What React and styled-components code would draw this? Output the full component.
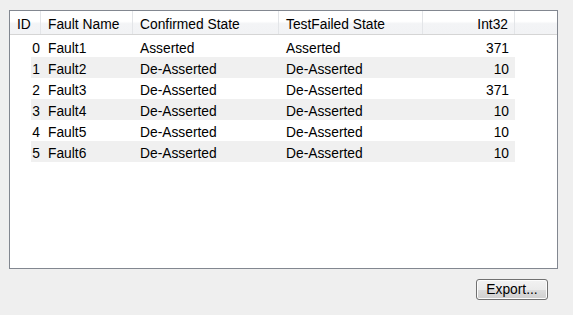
import React from 'react';
import styled, { createGlobalStyle } from 'styled-components';

const GlobalStyle = createGlobalStyle`
    html, body {
        margin: 0;
        padding: 0;
        background: #efefef;
    }
    body {
        font-family: "Liberation Sans", Arial, sans-serif;
        font-size: 13.8px;
        color: #000;
    }
`;

const COLS = '31px 92px 146px 144px 92px 1fr';

const Window = styled.div`
    width: 573px;
    height: 315px;
    box-sizing: border-box;
    padding: 10px 0 0 9px;
    display: flex;
    flex-direction: column;
`;

const ListBox = styled.div`
    width: 549px;
    height: 259px;
    box-sizing: border-box;
    border: 1px solid #828790;
    background: #fff;
    display: flex;
    flex-direction: column;
`;

const Header = styled.div`
    display: grid;
    grid-template-columns: ${COLS};
    height: 24px;
    box-sizing: border-box;
    border-bottom: 1px solid #d5d5d5;
    background: linear-gradient(#ffffff 0%, #ffffff 45%, #f3f4f6 55%, #f2f3f5 100%);
`;

const HeaderCell = styled.div`
    display: flex;
    align-items: center;
    justify-content: ${({ right }) => (right ? 'flex-end' : 'flex-start')};
    padding: 4px 6px 0 7px;
    border-right: ${({ last }) => (last ? 'none' : '1px solid #e3e5e8')};
    white-space: nowrap;
`;

const Rows = styled.div`
    padding-top: 1px;
    display: flex;
    flex-direction: column;
`;

const Row = styled.div`
    display: grid;
    grid-template-columns: 10px 92px 146px 144px 92px;
    width: 484px;
    margin-left: 21px;
    height: 21px;
    background: ${({ striped }) => (striped ? '#f0f0f0' : 'transparent')};
`;

const Cell = styled.div`
    display: flex;
    align-items: center;
    justify-content: ${({ right }) => (right ? 'flex-end' : 'flex-start')};
    padding: ${({ right }) => (right ? '3px 6px 0 0' : '3px 0 0 7px')};
    white-space: nowrap;
`;

const IdCell = styled(Cell)`
    padding: 3px 1px 0 0;
    overflow: visible;
`;

const Footer = styled.div`
    display: flex;
    justify-content: flex-end;
    width: 549px;
    padding-top: 10px;
`;

const Button = styled.button`
    width: 72px;
    height: 21px;
    margin-right: 10px;
    padding: 0;
    font: inherit;
    color: #000;
    border: 1px solid #707070;
    border-radius: 3px;
    background: linear-gradient(#f2f2f2 0%, #ebebeb 50%, #dddddd 51%, #cfcfcf 100%);
    box-shadow: inset 0 0 0 1px #fcfcfc;
    line-height: 17px;
`;

const faults = [
    { id: 0, name: 'Fault1', confirmed: 'Asserted', testFailed: 'Asserted', value: 371 },
    { id: 1, name: 'Fault2', confirmed: 'De-Asserted', testFailed: 'De-Asserted', value: 10 },
    { id: 2, name: 'Fault3', confirmed: 'De-Asserted', testFailed: 'De-Asserted', value: 371 },
    { id: 3, name: 'Fault4', confirmed: 'De-Asserted', testFailed: 'De-Asserted', value: 10 },
    { id: 4, name: 'Fault5', confirmed: 'De-Asserted', testFailed: 'De-Asserted', value: 10 },
    { id: 5, name: 'Fault6', confirmed: 'De-Asserted', testFailed: 'De-Asserted', value: 10 },
];

const App = () => (
    <>
        <GlobalStyle />
        <Window>
            <ListBox>
                <Header>
                    <HeaderCell>ID</HeaderCell>
                    <HeaderCell>Fault Name</HeaderCell>
                    <HeaderCell>Confirmed State</HeaderCell>
                    <HeaderCell>TestFailed State</HeaderCell>
                    <HeaderCell right>Int32</HeaderCell>
                    <HeaderCell last />
                </Header>
                <Rows>
                    {faults.map((f, i) => (
                        <Row key={f.id} striped={i % 2 === 1}>
                            <IdCell right>{f.id}</IdCell>
                            <Cell>{f.name}</Cell>
                            <Cell>{f.confirmed}</Cell>
                            <Cell>{f.testFailed}</Cell>
                            <Cell right>{f.value}</Cell>
                        </Row>
                    ))}
                </Rows>
            </ListBox>
            <Footer>
                <Button>Export...</Button>
            </Footer>
        </Window>
    </>
);

export default App;
